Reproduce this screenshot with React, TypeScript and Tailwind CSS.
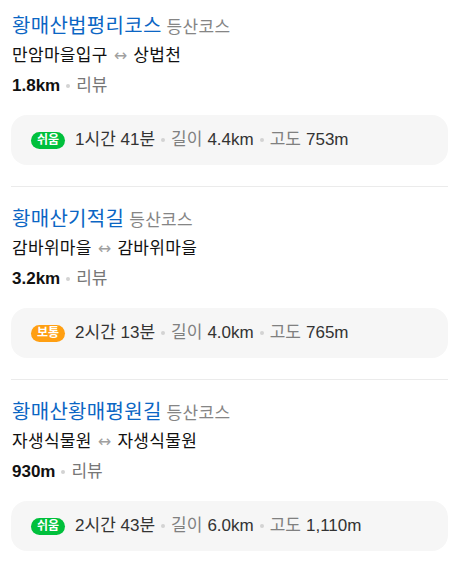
import React from 'react';

type Course = {
  name: string;
  start: string;
  end: string;
  distance: string;
  level: '쉬움' | '보통';
  time: string;
  length: string;
  altitude: string;
};

const courses: Course[] = [
  { name: '황매산법평리코스', start: '만암마을입구', end: '상법천', distance: '1.8km', level: '쉬움', time: '1시간 41분', length: '4.4km', altitude: '753m' },
  { name: '황매산기적길', start: '감바위마을', end: '감바위마을', distance: '3.2km', level: '보통', time: '2시간 13분', length: '4.0km', altitude: '765m' },
  { name: '황매산황매평원길', start: '자생식물원', end: '자생식물원', distance: '930m', level: '쉬움', time: '2시간 43분', length: '6.0km', altitude: '1,110m' },
];

const Dot = () => <span className="mx-[6px] inline-block h-[4px] w-[4px] shrink-0 rounded-full bg-[#d3d3d3]" />;

const CourseItem = ({ course, first, last }: { course: Course; first: boolean; last: boolean }) => {
  const easy = course.level === '쉬움';
  return (
    <div className={`${first ? 'pt-[12px]' : 'pt-[18px]'} ${last ? '' : 'border-b border-[#ebebeb] pb-[21px]'}`}>
      <div className="flex h-[28px] items-baseline whitespace-nowrap px-[1px] leading-[28px]">
        <span className="text-[20px] tracking-[0.3px] text-[#0b66c4]">{course.name}</span>
        <span className="ml-[5px] text-[17px] tracking-[0.3px] text-[#858585]">등산코스</span>
      </div>
      <div className="mt-[3px] flex h-[26px] items-center whitespace-nowrap px-[1px] text-[17px] tracking-[0.3px] text-[#111]">
        <span>{course.start}</span>
        <span className="mx-[6px] text-[16px] text-[#a0a0a0]" style={{ fontFamily: '"DejaVu Sans", sans-serif' }}>
          ↔
        </span>
        <span>{course.end}</span>
      </div>
      <div className="mt-[4px] flex h-[26px] items-center px-[1px] text-[17px]">
        <span className="font-bold text-[#111]">{course.distance}</span>
        <Dot />
        <span className="text-[#777]">리뷰</span>
      </div>
      <div className="mt-[16px] flex h-[50px] items-center whitespace-nowrap rounded-[16px] bg-[#f6f6f6] px-[20px] text-[17px] text-[#333]">
        <span
          className={`mr-[10px] flex h-[17px] items-center rounded-full px-[6px] text-[12px] font-bold text-white ${
            easy ? 'bg-[#00c03c]' : 'bg-[#ff9f12]'
          }`}
        >
          {course.level}
        </span>
        <span>{course.time}</span>
        <Dot />
        <span className="mr-[5px] text-[#808080]">길이</span>
        <span>{course.length}</span>
        <Dot />
        <span className="mr-[5px] text-[#808080]">고도</span>
        <span>{course.altitude}</span>
      </div>
    </div>
  );
};

export default function App() {
  return (
    <div
      className="min-h-[567px] w-[459px] bg-white px-[11px]"
      style={{ fontFamily: '"Liberation Sans", "Noto Sans CJK KR", sans-serif' }}
    >
      {courses.map((c, i) => (
        <CourseItem key={c.name} course={c} first={i === 0} last={i === courses.length - 1} />
      ))}
    </div>
  );
}
